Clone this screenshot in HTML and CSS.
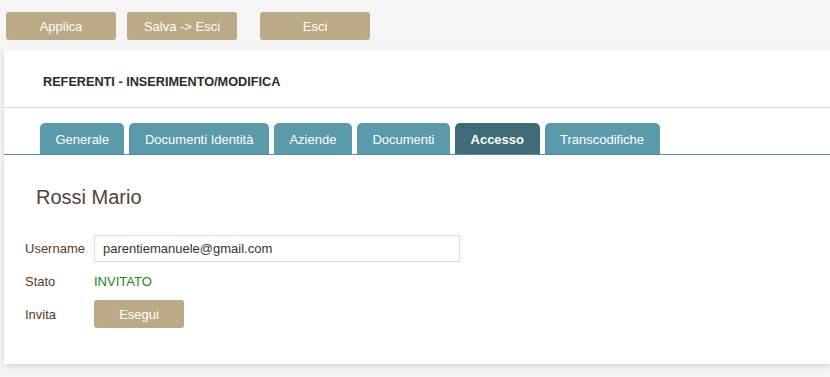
FILE: index.html
```html
<!DOCTYPE html>
<html>
<head>
	<title>Referenti</title>
	<meta name="viewport" content="width=device-width, initial-scale=1.0">
	<link rel="stylesheet" href="styles.css">
</head>
<body>
  <div class="toolbar">
  	<button class="btn">Applica</button>
  	<button class="btn">Salva -&gt; Esci</button>
  	<button class="btn btn-exit">Esci</button>
  </div>

  <div class="card">
  	<div class="card-head">REFERENTI - INSERIMENTO/MODIFICA</div>

  	<div class="tabs">
  		<div class="tab">Generale</div>
  		<div class="tab">Documenti Identità</div>
  		<div class="tab">Aziende</div>
  		<div class="tab">Documenti</div>
  		<div class="tab active">Accesso</div>
  		<div class="tab">Transcodifiche</div>
  	</div>

  	<div class="tab-body">
  		<div class="person">Rossi Mario</div>
  		<div class="form-grid">
  			<label class="lbl">Username</label>
  			<input class="field" type="text" value="parentiemanuele@gmail.com">

  			<span class="lbl">Stato</span>
  			<span class="state">INVITATO</span>

  			<span class="lbl">Invita</span>
  			<div><button class="btn btn-small">Esegui</button></div>
  		</div>
  	</div>
  </div>
</body>
</html>
```

FILE: styles.css
```css
*{
	box-sizing: border-box;
	font-family: "Liberation Sans", Arial, sans-serif;
}
body{
	margin: 0;
	background: #f5f5f5;
	width: 830px;
	height: 377px;
	overflow: hidden;
}

.toolbar{
	display: flex;
	padding: 12px 0 10px 6px;
	height: 50px;
}
.btn{
	width: 110px;
	height: 28px;
	margin-right: 11px;
	background: #bca985;
	border: 0;
	border-radius: 3px;
	color: white;
	font-size: 13px;
	padding: 0;
}
.btn-exit{
	margin-left: 12px;
}
.btn-small{
	width: 90px;
	margin: 0;
}

.card{
	margin-left: 4px;
	background: white;
	box-shadow: 0px 2px 6px rgba(0,0,0,0.14);
	padding-bottom: 36px;
}
.card-head{
	padding: 25px 0 17px 39px;
	font-size: 12.7px;
	line-height: 15px;
	font-weight: bold;
	color: #2b2b2b;
	border-bottom: 1px solid #ddd5cb;
}

.tabs{
	display: flex;
	margin-top: 15px;
	padding-left: 36px;
	border-bottom: 1px solid #4f93a3;
}
.tab{
	margin-right: 5px;
	padding: 9px 15.5px 7px;
	line-height: 15px;
	background: #5b9aab;
	color: white;
	font-size: 13px;
	border-radius: 5px 5px 0 0;
}
.tab.active{
	background: #3f6a77;
	font-weight: bold;
}

.tab-body{
	padding: 30px 0 0 21px;
}
.person{
	padding-left: 11px;
	font-size: 20px;
	line-height: 24px;
	color: #4f4234;
	margin-bottom: 26px;
}
.form-grid{
	display: grid;
	grid-template-columns: 69px 366px;
	grid-template-rows: 27px 30px 28px;
	row-gap: 4px;
	align-items: center;
	font-size: 13px;
}
.lbl{
	color: #5e3a22;
}
.field{
	height: 27px;
	border: 1px solid #dcdcdc;
	padding: 0 8px;
	font-size: 13px;
	color: #333;
	outline: none;
}
.state{
	color: #17861c;
}
```
